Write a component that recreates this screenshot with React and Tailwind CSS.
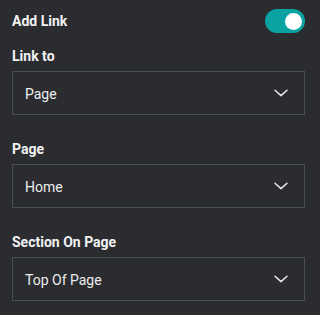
import React from "react";

function Chevron() {
  return (
    <svg width="14" height="8" viewBox="0 0 14 8" fill="none" className="shrink-0">
      <path d="M1 1.2L7 6.6L13 1.2" stroke="#e8e8ea" strokeWidth="1.5" strokeLinecap="round" strokeLinejoin="round" />
    </svg>
  );
}

function Field({ label, value, top }) {
  return (
    <div className={top}>
      <div className="text-[14px] leading-[20px] font-bold text-[#f2f2f3]">{label}</div>
      <div className="mt-[5px] h-[44px] border border-[#4b4d55] flex items-center justify-between pl-[12px] pr-[16px]">
        <span className="text-[14px] text-[#ececee] pt-[3px]">{value}</span>
        <Chevron />
      </div>
    </div>
  );
}

export default function App() {
  return (
    <div
      className="w-[320px] h-[315px] bg-[#2b2c30] pl-[12px] pr-[15px] pt-[9px]"
      style={{ fontFamily: "Roboto, 'Noto Sans', sans-serif" }}
    >
      <div className="flex items-center justify-between h-[24px]">
        <span className="text-[14px] font-bold text-[#f2f2f3]">Add Link</span>
        <div className="w-[40px] h-[24px] rounded-full bg-[#0aa3a2] flex items-center justify-end pr-[3px]">
          <div className="w-[17px] h-[17px] rounded-full bg-white" />
        </div>
      </div>
      <Field label="Link to" value="Page" top="mt-[13px]" />
      <Field label="Page" value="Home" top="mt-[24px]" />
      <Field label="Section On Page" value="Top Of Page" top="mt-[24px]" />
    </div>
  );
}
